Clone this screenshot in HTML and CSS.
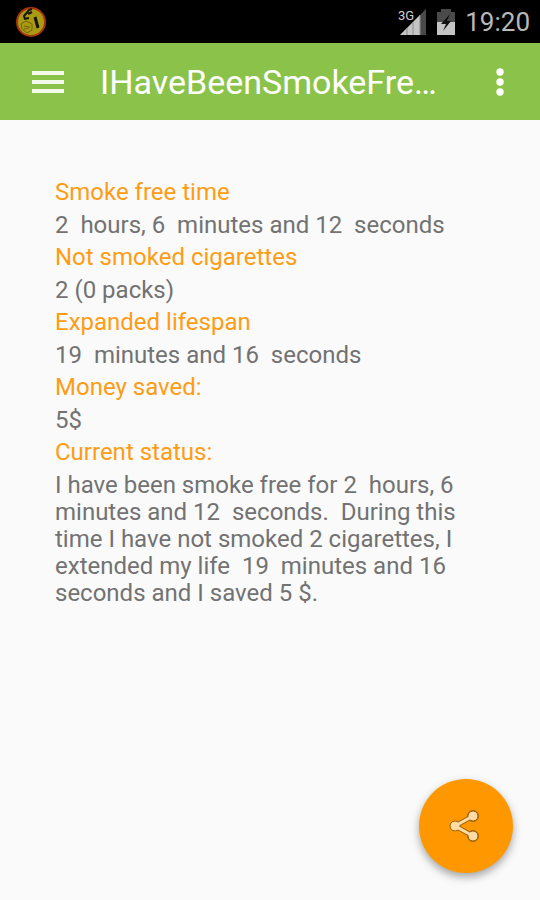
FILE: index.html
```html
<!DOCTYPE html>
<html lang="en">
<head>
    <meta charset="UTF-8">
    <meta name="viewport" content="width=device-width, initial-scale=1.0">
    <title>IHaveBeenSmokeFree</title>
    <link rel="stylesheet" href="styles.css">
</head>
<body>

    <div class="status-bar">
        <svg class="app-icon" width="32" height="32" viewBox="0 0 32 32" aria-hidden="true">
            <circle cx="16" cy="16" r="14" fill="#a99a12" stroke="#a8340c" stroke-width="2"/>
            <path d="M10 13L9 10L14 4L17 3M9 13L14 12M13 8L17 6" fill="none" stroke="#15130a" stroke-width="2"/>
            <path d="M20 11L23 22" stroke="#15130a" stroke-width="3"/>
            <path d="M6 18L11 15L17 18L17 24L12 27L7 23ZM9 20L15 21M9 23L14 22" fill="none" stroke="#6d6310" stroke-width="1"/>
        </svg>
        <div class="status-right">
            <svg class="signal" width="29" height="28" viewBox="0 0 29 28" aria-hidden="true">
                <path d="M28 1V27H2Z" fill="#4a4a4a"/>
                <path d="M22 7V27H2Z" fill="#c4c4c4"/>
                <path d="M9 20V27M15 14V27M22 7V27" stroke="#8c8c8c" stroke-width="1"/>
                <text x="0" y="12" class="signal-text">3G</text>
            </svg>
            <svg class="battery" width="18" height="28" viewBox="0 0 18 28" aria-hidden="true">
                <path d="M4 1H14V4H18V15H0V4H4Z" fill="#4a4a4a"/>
                <path d="M0 14H18V27H0Z" fill="#c4c4c4"/>
                <path d="M13 6L4 16H9L6 23L14 13H10Z" fill="#111"/>
            </svg>
            <span class="clock">19:20</span>
        </div>
    </div>

    <header class="app-bar">
        <button type="button" class="icon-button" aria-label="Open menu">
            <svg width="32" height="24" viewBox="0 0 32 24">
                <path d="M0 3H32M0 12H32M0 21H32" stroke="#f4fae9" stroke-width="4"/>
            </svg>
        </button>
        <h1>IHaveBeenSmokeFre…</h1>
        <button type="button" class="icon-button" aria-label="More options">
            <svg width="8" height="28" viewBox="0 0 8 28">
                <g fill="#fff">
                    <circle cx="4" cy="4" r="3.700"/>
                    <circle cx="4" cy="14" r="3.700"/>
                    <circle cx="4" cy="24" r="3.700"/>
                </g>
            </svg>
        </button>
    </header>

    <main>
        <dl class="stats">
            <dt>Smoke free time</dt>
            <dd>2  hours, 6  minutes and 12  seconds</dd>
            <dt>Not smoked cigarettes</dt>
            <dd>2 (0 packs)</dd>
            <dt>Expanded lifespan</dt>
            <dd>19  minutes and 16  seconds</dd>
            <dt>Money saved:</dt>
            <dd>5$</dd>
            <dt>Current status:</dt>
            <dd>I have been smoke free for 2  hours, 6 minutes and 12  seconds.  During this time I have not smoked 2 cigarettes, I extended my life  19  minutes and 16 seconds and I saved 5 $.</dd>
        </dl>
    </main>

    <button type="button" class="share-button" aria-label="Share">
        <svg width="32" height="32" viewBox="0 0 32 32">
            <g stroke="#a4690f" fill="#a4690f">
                <path d="M23 6L5 16L23 26" fill="none" stroke-width="5"/>
                <circle cx="23" cy="6" r="5.500"/>
                <circle cx="5" cy="16" r="5"/>
                <circle cx="23" cy="26" r="5.500"/>
            </g>
            <g stroke="#ffdca6" fill="#ffdca6">
                <path d="M23 6L5 16L23 26" fill="none" stroke-width="3"/>
                <circle cx="23" cy="6" r="4"/>
                <circle cx="5" cy="16" r="4"/>
                <circle cx="23" cy="26" r="4"/>
            </g>
        </svg>
    </button>

</body>
</html>
```
FILE: styles.css
```css
* {
    box-sizing: border-box;
}

body {
    margin: 0;
    min-height: 100vh;
    background-color: #fafafa;
    color: #727272;
    font-family: Roboto, sans-serif;
    font-size: 24px;
    line-height: 27px;
}

.status-bar {
    display: flex;
    justify-content: space-between;
    align-items: center;
    height: 43px;
    padding: 0 10px 0 15px;
    background-color: #000;
}

.status-right {
    display: flex;
    align-items: center;
    gap: 10px;
}

.signal,
.share-button svg {
    overflow: visible;
}

.signal-text {
    font-size: 13px;
    fill: #d0d0d0;
    stroke: #000;
    stroke-width: 2px;
    paint-order: stroke;
}

.clock {
    padding-top: 2px;
    color: #b8b8b8;
    font-size: 26px;
}

.app-bar {
    display: flex;
    align-items: center;
    height: 77px;
    padding: 0 20px;
    background-color: #8bc34a;
}

.app-bar h1 {
    flex: 1;
    margin: 0 0 0 24px;
    color: #fff;
    font-size: 34px;
    font-weight: normal;
    line-height: 40px;
    white-space: nowrap;
}

.icon-button {
    display: flex;
    justify-content: center;
    align-items: center;
    width: 56px;
    height: 48px;
    padding: 0;
    border: none;
    background: none;
    cursor: pointer;
}

.app-bar .icon-button:last-child {
    width: 40px;
}

main {
    padding: 59px 55px;
}

.stats {
    margin: 0;
}

.stats dt {
    margin-bottom: 6px;
    color: #ff9c14;
}

.stats dd {
    margin: 0 0 5px;
    white-space: pre-wrap;
}

.share-button {
    position: fixed;
    right: 27px;
    bottom: 27px;
    display: flex;
    justify-content: center;
    align-items: center;
    width: 94px;
    height: 94px;
    padding: 0;
    border: none;
    border-radius: 50%;
    background-color: #ff9800;
    box-shadow: 0 4px 8px rgba(0, 0, 0, 0.35);
    cursor: pointer;
}
```
